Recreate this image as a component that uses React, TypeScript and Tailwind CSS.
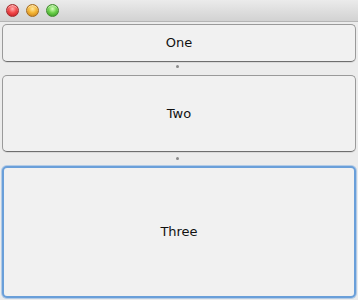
export default function App() {
	const dots = [
		{ key: 'close', grad: 'bg-[radial-gradient(circle_at_50%_35%,#ffb0b0_0%,#f3494a_45%,#b8141c_100%)]', ring: 'border-[#a02a2c]' },
		{ key: 'min', grad: 'bg-[radial-gradient(circle_at_50%_35%,#ffe8a0_0%,#f4b634_45%,#c0761a_100%)]', ring: 'border-[#a56b1c]' },
		{ key: 'max', grad: 'bg-[radial-gradient(circle_at_50%_35%,#d8ffc0_0%,#6cd14a_45%,#2c8a1e_100%)]', ring: 'border-[#3f8a2c]' },
	]

	return (
		<div
			className="w-[358px] h-[300px] flex flex-col bg-[#ececec] overflow-hidden"
			style={{ fontFamily: '"DejaVu Sans", "Noto Sans", sans-serif' }}
		>
			{/* Title bar */}
			<div className="h-[22px] shrink-0 flex items-center gap-[7px] pl-[6px] bg-gradient-to-b from-[#ebebeb] to-[#d2d2d2] border-b border-[#b5b5b5]">
				{dots.map((d) => (
					<span key={d.key} className={`w-[13px] h-[13px] rounded-full border ${d.ring} ${d.grad} shadow-[inset_0_1px_1px_rgba(255,255,255,0.6)]`} />
				))}
			</div>

			{/* Split panes */}
			<div className="flex-1 flex flex-col px-[2px] pt-[2px] pb-[2px]">
				<Pane label="One" className="h-[38px]" />
				<Divider className="h-[13px] pt-[3px]" />
				<Pane label="Two" className="h-[77px]" />
				<Divider className="h-[14px] pt-[5px]" />
				<Pane label="Three" className="flex-1" focused />
			</div>
		</div>
	)
}

function Pane({ label, className, focused }: { label: string; className: string; focused?: boolean }) {
	return (
		<div
			className={`${className} flex items-center justify-center rounded-[5px] bg-[#f1f1f1] text-[13px] text-[#111] ${
				focused
					? 'border-2 border-[#6a9fd9] shadow-[0_0_0_1px_rgba(120,170,225,0.5)]'
					: 'border border-[#9a9a9a] border-b-[#6e6e6e] shadow-[0_1px_0_rgba(0,0,0,0.08)]'
			}`}
		>
			{label}
		</div>
	)
}

function Divider({ className }: { className: string }) {
	return (
		<div className={`${className} shrink-0 flex justify-center`}>
			<span className="w-[3px] h-[3px] rounded-full bg-[#8a8a8a] -translate-x-[2px]" />
		</div>
	)
}
